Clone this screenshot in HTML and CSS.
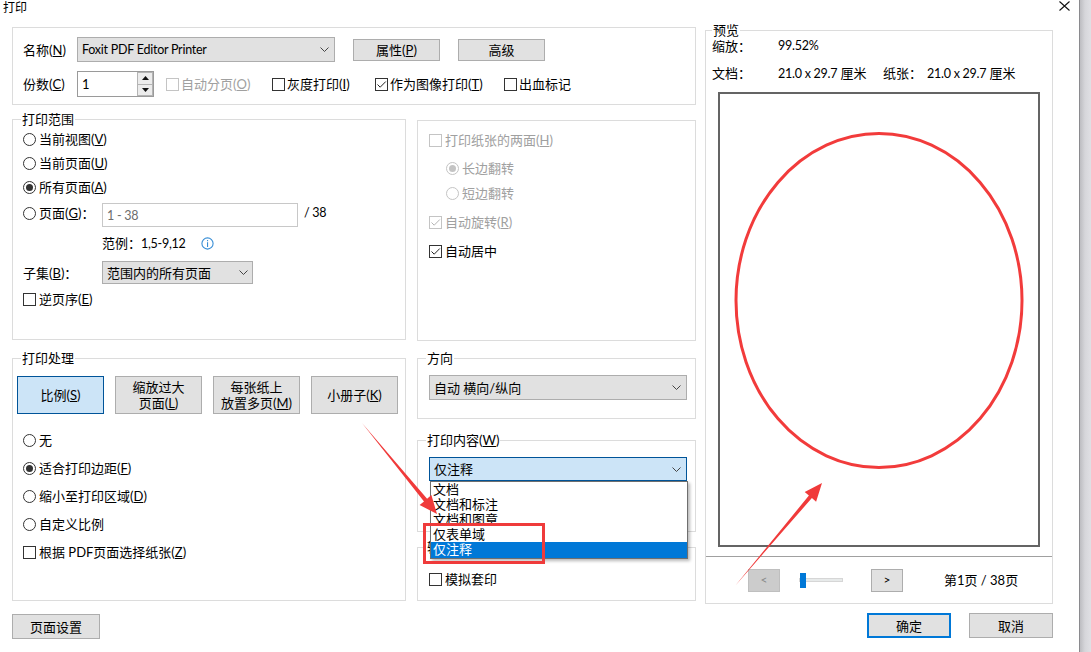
FILE: index.html
```html
<!DOCTYPE html>
<html lang="zh-CN">
<head>
<meta charset="utf-8">
<title>打印</title>
<link rel="stylesheet" href="styles.css">
</head>
<body>
<div class="window">
  <div class="dialog">
    <div class="titlebar">
      <span class="title">打印</span>
      <svg class="close" width="11" height="10" viewBox="0 0 11 10"><path d="M0.5 0.5 L10.5 9.5 M10.5 0.5 L0.5 9.5" stroke="#111" stroke-width="1.1" fill="none"/></svg>
    </div>

    <div class="main">
      <div class="leftcol">
        <div class="group topgrp">
          <div class="toprow">
            <span class="lbl">名称(<u>N</u>)</span>
            <div class="select printer"><span class="lat">Foxit PDF Editor Printer</span><svg class="chev" width="9" height="5" viewBox="0 0 9 5"><polyline points="0.5,0.5 4.5,4.5 8.5,0.5" fill="none" stroke="#444"/></svg></div>
            <button class="btn btn-prop">属性(<u>P</u>)</button>
            <button class="btn btn-adv">高级</button>
          </div>
          <div class="toprow second">
            <span class="lbl">份数(<u>C</u>)</span>
            <div class="spin">
              <span class="spinval">1</span>
              <div class="spinbtns">
                <span class="sb"><svg width="7" height="4" viewBox="0 0 7 4"><polygon points="0,4 3.5,0 7,4" fill="#111"/></svg></span>
                <span class="sb"><svg width="7" height="4" viewBox="0 0 7 4"><polygon points="0,0 3.5,4 7,0" fill="#111"/></svg></span>
              </div>
            </div>
            <span class="chk dis c1"><span class="box"></span>自动分页(<u>O</u>)</span>
            <span class="chk c2"><span class="box"></span>灰度打印(<u>I</u>)</span>
            <span class="chk c3"><span class="box"><svg class="tick" width="11" height="11" viewBox="0 0 11 11"><polyline points="1.5,5.5 4.2,8.2 9.8,2.5" fill="none" stroke="#222" stroke-width="1"/></svg></span>作为图像打印(<u>T</u>)</span>
            <span class="chk"><span class="box"></span>出血标记</span>
          </div>
        </div>

        <div class="row2">
          <div class="group range">
            <span class="legend">打印范围</span>
            <div class="opt"><span class="radio"></span>当前视图(<u>V</u>)</div>
            <div class="opt"><span class="radio"></span>当前页面(<u>U</u>)</div>
            <div class="opt"><span class="radio on"></span>所有页面(<u>A</u>)</div>
            <div class="opt pagerow">
              <span class="pagelbl"><span class="radio"></span>页面(<u>G</u>)：</span>
              <span class="textin"><span class="lat">1 - 38</span></span>
              <span class="total lat">/ 38</span>
            </div>
            <div class="opt example">
              <span class="extext">范例：<span class="lat">1,5-9,12</span></span>
              <svg class="info" width="13" height="13" viewBox="0 0 13 13"><circle cx="6.5" cy="6.5" r="5.6" fill="none" stroke="#3a8fd6" stroke-width="1.1"/><rect x="6" y="3" width="1.1" height="1.2" fill="#3a8fd6"/><rect x="6" y="5.2" width="1.1" height="4.8" fill="#3a8fd6"/></svg>
            </div>
            <div class="opt subset">
              <span class="sublbl">子集(<u>B</u>)：</span>
              <div class="select subsel"><span>范围内的所有页面</span><svg class="chev" width="9" height="5" viewBox="0 0 9 5"><polyline points="0.5,0.5 4.5,4.5 8.5,0.5" fill="none" stroke="#444"/></svg></div>
            </div>
            <div class="opt reverse"><span class="chk"><span class="box"></span>逆页序(<u>E</u>)</span></div>
          </div>

          <div class="group duplex">
            <div class="dopt d1 dis"><span class="box"></span>打印纸张的两面(<u>H</u>)</div>
            <div class="dopt d2 dis indent"><span class="radio on"></span>长边翻转</div>
            <div class="dopt d3 dis indent"><span class="radio"></span>短边翻转</div>
            <div class="dopt d4 dis"><span class="box"><svg class="tick" width="11" height="11" viewBox="0 0 11 11"><polyline points="1.5,5.5 4.2,8.2 9.8,2.5" fill="none" stroke="#b4b4b4" stroke-width="1"/></svg></span>自动旋转(<u>R</u>)</div>
            <div class="dopt d5"><span class="box"><svg class="tick" width="11" height="11" viewBox="0 0 11 11"><polyline points="1.5,5.5 4.2,8.2 9.8,2.5" fill="none" stroke="#222" stroke-width="1"/></svg></span>自动居中</div>
          </div>
        </div>

        <div class="row3">
          <div class="group proc">
            <span class="legend">打印处理</span>
            <div class="pbtns">
              <button class="pbtn sel">比例(<u>S</u>)</button>
              <button class="pbtn">缩放过大<br>页面(<u>L</u>)</button>
              <button class="pbtn">每张纸上<br>放置多页(<u>M</u>)</button>
              <button class="pbtn">小册子(<u>K</u>)</button>
            </div>
            <div class="popts">
              <div class="popt first"><span class="radio"></span>无</div>
              <div class="popt"><span class="radio on"></span>适合打印边距(<u>F</u>)</div>
              <div class="popt"><span class="radio"></span>缩小至打印区域(<u>D</u>)</div>
              <div class="popt"><span class="radio"></span>自定义比例</div>
              <div class="popt"><span class="box"></span>根据 PDF页面选择纸张(<u>Z</u>)</div>
            </div>
          </div>

          <div class="rstack">
            <div class="group dir">
              <span class="legend">方向</span>
              <div class="select wide"><span>自动 横向/纵向</span><svg class="chev" width="9" height="5" viewBox="0 0 9 5"><polyline points="0.5,0.5 4.5,4.5 8.5,0.5" fill="none" stroke="#444"/></svg></div>
            </div>
            <div class="group content">
              <span class="legend">打印内容(<u>W</u>)</span>
              <div class="select wide active"><span>仅注释</span><svg class="chev" width="9" height="5" viewBox="0 0 9 5"><polyline points="0.5,0.5 4.5,4.5 8.5,0.5" fill="none" stroke="#444"/></svg>
                <ul class="droplist">
                  <li>文档</li>
                  <li>文档和标注</li>
                  <li>文档和图章</li>
                  <li>仅表单域</li>
                  <li class="cur">仅注释</li>
                </ul>
              </div>
            </div>
            <div class="group output">
              <span class="legend">输出</span>
              <div class="dopt"><span class="box"></span>模拟套印</div>
            </div>
          </div>
        </div>
      </div>

      <div class="group preview">
        <span class="legend">预览</span>
        <div class="pvtop">
          <div class="pvrow"><span class="pk">缩放：</span><span class="lat">99.52%</span></div>
          <div class="pvrow r2"><span class="pk">文档：</span><span class="pv"><span class="lat">21.0 x 29.7</span> 厘米</span><span class="pk2">纸张：</span><span><span class="lat">21.0 x 29.7</span> 厘米</span></div>
          <div class="page">
            <svg width="318" height="451" viewBox="0 0 318 451"><ellipse cx="159" cy="206.5" rx="143" ry="167" fill="none" stroke="#f23b3b" stroke-width="3"/></svg>
          </div>
        </div>
        <div class="pvnav">
          <button class="nbtn off">&lt;</button>
          <div class="slider"><span class="thumb"></span></div>
          <button class="nbtn next">&gt;</button>
          <span class="pageno">第1页 / 38页</span>
        </div>
      </div>
    </div>

    <div class="bottombar">
      <button class="btn bbtn setup">页面设置</button>
      <button class="btn bbtn ok">确定</button>
      <button class="btn bbtn cancel">取消</button>
    </div>

    <svg class="annot" width="1079" height="652" viewBox="0 0 1079 652">
      <polygon points="362,423 424.0,501.4 419.6,505.0 437,514 431.4,495.1 427.1,498.8" fill="#f03a3a"/>
      <polygon points="735,586 811.9,498.0 816.1,501.7 822,483 804.7,491.9 808.9,495.5" fill="#f03a3a"/>
      <rect x="424.5" y="524.5" width="119" height="38" fill="none" stroke="#ef3b3b" stroke-width="3"/>
    </svg>
  </div>
  <div class="edge"></div>
</div>
</body>
</html>
```

FILE: styles.css
```css
html, body {
  margin: 0;
  padding: 0;
  background: #fff;
}
body {
  font-family: Lato, "Noto Sans CJK SC", "Microsoft YaHei", sans-serif;
  font-size: 13px;
  line-height: 16px;
  color: #000;
}
u { text-decoration: underline; text-underline-offset: 1px; }
.lat { font-size: 12.5px; letter-spacing: -0.25px; }

.window {
  display: flex;
  width: 1091px;
  height: 652px;
  overflow: hidden;
}
.dialog {
  position: relative;
  width: 1079px;
  height: 652px;
  background: #fff;
  display: flex;
  flex-direction: column;
  flex: none;
}
.edge {
  flex: 1;
  border-left: 1px solid #8a8a8e;
  background: linear-gradient(to right, #bdbdc1, #d6d6da 45%, #e0e0e4);
}

.titlebar {
  height: 27px;
  display: flex;
  justify-content: space-between;
  align-items: flex-start;
  padding: 0 9px 0 3px;
  box-sizing: border-box;
  flex: none;
}
.title { font-size: 12px; line-height: 15px; }
.close { margin-top: 1px; }

.main {
  display: flex;
  gap: 9px;
  padding-left: 12px;
  flex: none;
}
.leftcol {
  width: 684px;
  display: flex;
  flex-direction: column;
}

.group {
  position: relative;
  border: 1px solid #dcdcdc;
  box-sizing: border-box;
}
.legend {
  position: absolute;
  top: -9px;
  left: 8px;
  padding: 0 1px;
  background: #fff;
  line-height: 16px;
  white-space: nowrap;
}

/* generic controls */
.radio {
  width: 13px;
  height: 13px;
  border: 1px solid #333;
  border-radius: 50%;
  box-sizing: border-box;
  margin-right: 3px;
  flex: none;
  display: flex;
  align-items: center;
  justify-content: center;
  background: #fff;
}
.radio.on::after {
  content: "";
  width: 7px;
  height: 7px;
  border-radius: 50%;
  background: #333;
}
.box {
  width: 13px;
  height: 13px;
  border: 1px solid #333;
  box-sizing: border-box;
  margin-right: 3px;
  flex: none;
  position: relative;
  background: #fff;
}
.box .tick { position: absolute; left: 0; top: 0; }
.dis { color: #a0a0a0; }
.dis .box, .dis .radio { border-color: #c4c4c4; }
.dis .radio.on::after { background: #c4c4c4; }

.chk { display: flex; align-items: center; white-space: nowrap; }

.select {
  display: flex;
  align-items: center;
  box-sizing: border-box;
  border: 1px solid #adadad;
  background: #e1e1e1;
  padding-left: 4px;
  position: relative;
  white-space: nowrap;
}
.select .chev { margin-left: auto; margin-right: 5px; }

.btn {
  font: inherit;
  color: #000;
  padding: 0;
  border: 1px solid #adadad;
  background: #e1e1e1;
  box-sizing: border-box;
}

/* top group */
.topgrp {
  height: 78px;
  padding: 9px 0 0 10px;
}
.toprow {
  display: flex;
  align-items: center;
  height: 25px;
}
.toprow.second { margin-top: 9px; height: 26px; }
.lbl { width: 54px; flex: none; }
.printer { width: 258px; height: 25px; }
.btn-prop { width: 87px; height: 22px; margin-left: 18px; }
.btn-adv { width: 87px; height: 22px; margin-left: 18px; }

.spin {
  width: 77px;
  height: 26px;
  border: 1px solid #9a9a9a;
  box-sizing: border-box;
  display: flex;
  align-items: stretch;
  flex: none;
}
.spinval { padding-left: 4px; line-height: 24px; }
.spinbtns {
  margin-left: auto;
  width: 16px;
  display: flex;
  flex-direction: column;
}
.sb {
  flex: 1;
  border: 1px solid #b4b4b4;
  background: #ececec;
  display: flex;
  align-items: center;
  justify-content: center;
  box-sizing: border-box;
}
.sb + .sb { border-top: none; }
.toprow .chk.c1 { margin-left: 12px; width: 106px; }
.toprow .chk.c2 { width: 103px; }
.toprow .chk.c3 { width: 129px; }
.toprow .chk .box { margin-right: 2px; }

/* row 2 */
.row2 {
  display: flex;
  align-items: flex-start;
  gap: 11px;
  margin-top: 14px;
}
.range {
  width: 394px;
  height: 221px;
  padding: 7px 0 0 10px;
}
.opt {
  display: flex;
  align-items: center;
  height: 24px;
}
.pagerow { margin-top: 4px; align-items: flex-start; }
.pagelbl {
  display: flex;
  align-items: center;
  width: 79px;
  height: 18px;
  margin-top: 1px;
  flex: none;
}
.textin {
  width: 196px;
  height: 24px;
  border: 1px solid #c8c8c8;
  box-sizing: border-box;
  color: #6d6d6d;
  padding-left: 4px;
  line-height: 22px;
}
.total { margin-left: 6px; line-height: 20px; }
.example { margin-top: 6px; height: 20px; padding-left: 79px; }
.extext { width: 99px; }
.subset { margin-top: 8px; height: 23px; }
.sublbl { width: 79px; flex: none; }
.subsel { width: 151px; height: 23px; }
.subsel .chev { margin-right: 4px; }
.reverse { margin-top: 5px; height: 20px; }

.duplex {
  width: 279px;
  height: 221px;
  margin-top: 1px;
  padding: 9px 0 0 11px;
}
.dopt {
  display: flex;
  align-items: center;
  height: 20px;
  white-space: nowrap;
}
.indent { padding-left: 17px; }
.d2 { margin-top: 8px; }
.d3 { margin-top: 5px; }
.d4 { margin-top: 9px; }
.d5 { margin-top: 9px; }

/* row 3 */
.row3 {
  display: flex;
  align-items: flex-start;
  gap: 11px;
  margin-top: 17px;
}
.proc {
  width: 394px;
  height: 243px;
  padding: 17px 0 0 4px;
}
.pbtns { display: flex; gap: 11px; }
.pbtn {
  width: 87px;
  height: 38px;
  font: inherit;
  line-height: 16px;
  color: #000;
  padding: 0;
  border: 1px solid #adadad;
  background: #e1e1e1;
  box-sizing: border-box;
}
.pbtn.sel { background: #cce4f7; border-color: #005499; }
.popts { padding-left: 6px; }
.popt {
  display: flex;
  align-items: center;
  height: 20px;
  margin-top: 8px;
  white-space: nowrap;
}
.popt.first { margin-top: 16px; }

.rstack {
  width: 279px;
  display: flex;
  flex-direction: column;
}
.dir {
  height: 61px;
  padding: 16px 0 0 11px;
}
.select.wide { width: 258px; height: 25px; }
.content {
  margin-top: 21px;
  height: 92px;
  padding: 16px 0 0 11px;
  z-index: 2;
}
.select.active {
  height: 24px;
  background: #cce4f7;
  border-color: #005499;
}
.droplist {
  position: absolute;
  left: 0;
  top: 23px;
  width: 258px;
  height: 78px;
  margin: 0;
  padding: 0;
  list-style: none;
  background: #fff;
  border: 1px solid #6f6f6f;
  box-sizing: border-box;
  box-shadow: 2px 2px 3px rgba(0, 0, 0, 0.28);
  z-index: 5;
}
.droplist li {
  height: 15px;
  line-height: 15px;
  padding-left: 2px;
}
.droplist li.cur { background: #0078d7; color: #fff; height: 16px; }
.output {
  margin-top: 15px;
  height: 54px;
  padding: 21px 0 0 11px;
}

/* preview */
.preview {
  width: 348px;
  height: 574px;
  margin-top: 3px;
  display: flex;
  flex-direction: column;
}
.preview .legend { left: 6px; }
.pvtop {
  padding: 5px 0 0 6px;
  height: 525px;
  box-sizing: border-box;
}
.pvrow {
  display: flex;
  align-items: center;
  height: 20px;
  white-space: nowrap;
}
.pvrow.r2 { margin-top: 7px; }
.pk { width: 66px; }
.pv { width: 105px; }
.pk2 { width: 44px; }
.page {
  width: 322px;
  height: 455px;
  margin: 9px 0 0 6px;
  border: 2px solid #646464;
  box-sizing: border-box;
}
.page svg { display: block; }
.pvnav {
  border-top: 1px solid #a0a0a0;
  flex: 1;
  display: flex;
  align-items: center;
  padding-left: 42px;
}
.nbtn {
  width: 32px;
  height: 23px;
  font: inherit;
  font-size: 12px;
  padding: 0;
  color: #000;
  border: 1px solid #adadad;
  background: #e1e1e1;
  box-sizing: border-box;
}
.nbtn.off { background: #cccccc; border-color: #bfbfbf; color: #8a8a8a; }
.slider {
  position: relative;
  width: 44px;
  height: 4px;
  margin-left: 19px;
  background: #e7eaea;
  border: 1px solid #d6d6d6;
  box-sizing: border-box;
}
.thumb {
  position: absolute;
  left: 0;
  top: -6px;
  width: 6px;
  height: 15px;
  background: #0078d7;
}
.nbtn.next { margin-left: 28px; }
.pageno { margin-left: 41px; white-space: nowrap; }

/* bottom */
.bottombar {
  display: flex;
  align-items: flex-start;
  padding: 0 26px 0 12px;
  margin-top: 9px;
}
.bbtn { height: 25px; }
.setup { width: 88px; margin-top: 1px; }
.ok { width: 84px; margin-left: auto; border: 2px solid #0078d7; }
.cancel { width: 84px; margin-left: 18px; }

.annot {
  position: absolute;
  left: 0;
  top: 0;
  pointer-events: none;
  z-index: 10;
}
```
